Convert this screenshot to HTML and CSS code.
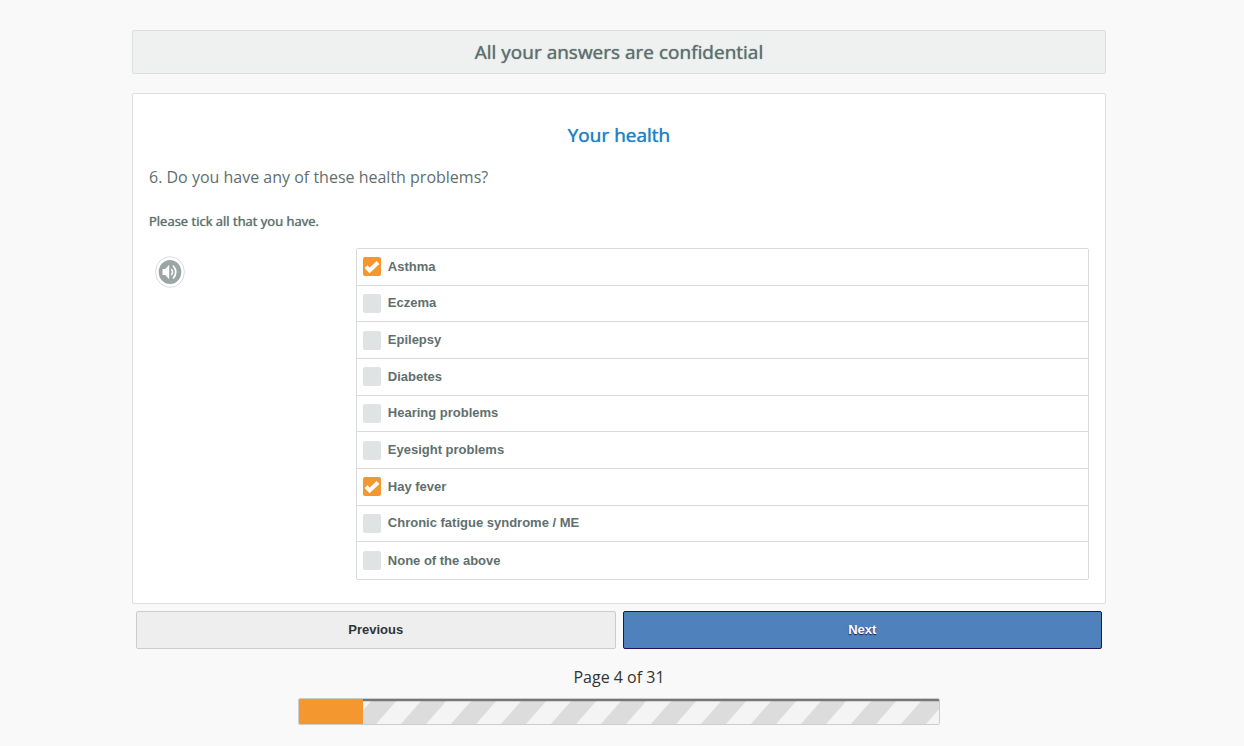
FILE: index.html
```html
<!DOCTYPE html>
<html lang="en">
<head>
<meta charset="utf-8">
<meta name="viewport" content="width=device-width, initial-scale=1">
<title>Your health</title>
<link rel="stylesheet" href="styles.css">
</head>
<body>
<form class="survey">
  <header class="banner">All your answers are confidential</header>
  <main class="panel">
    <h1 class="title">Your health</h1>
    <h2 class="question" id="question">6. Do you have any of these health problems?</h2>
    <p class="hint">Please tick all that you have.</p>
    <div class="answer">
      <button class="audio" type="button" aria-label="Listen to the question">
        <svg viewBox="0 0 30 32" width="30" height="32" aria-hidden="true">
          <ellipse cx="15" cy="16" rx="14.4" ry="15.4" fill="#fff" stroke="#d9dcdc"/>
          <ellipse cx="15" cy="16" rx="11.3" ry="12" fill="#9aa5a5"/>
          <path d="M7.500 13h2.800l3.900-4.200v14.400L10.300 19H7.500z" fill="#fff"/>
          <path d="M16.300 13q2.600 3 0 6" fill="none" stroke="#fff" stroke-width="1.500"/>
          <path d="M18 9.500q5.600 6.500 0 13" fill="none" stroke="#fff" stroke-width="1.700"/>
        </svg>
      </button>
      <div class="options" role="group" aria-labelledby="question">
        <label class="option"><input class="tick" type="checkbox" checked><span class="box"><svg viewBox="0 0 18 19" aria-hidden="true"><path d="M3 9.700l3.600 3.800L15 5.500" fill="none" stroke="#fff" stroke-width="4"/></svg></span>Asthma</label>
        <label class="option"><input class="tick" type="checkbox"><span class="box"></span>Eczema</label>
        <label class="option"><input class="tick" type="checkbox"><span class="box"></span>Epilepsy</label>
        <label class="option"><input class="tick" type="checkbox"><span class="box"></span>Diabetes</label>
        <label class="option"><input class="tick" type="checkbox"><span class="box"></span>Hearing problems</label>
        <label class="option"><input class="tick" type="checkbox"><span class="box"></span>Eyesight problems</label>
        <label class="option"><input class="tick" type="checkbox" checked><span class="box"><svg viewBox="0 0 18 19" aria-hidden="true"><path d="M3 9.700l3.600 3.800L15 5.500" fill="none" stroke="#fff" stroke-width="4"/></svg></span>Hay fever</label>
        <label class="option"><input class="tick" type="checkbox"><span class="box"></span>Chronic fatigue syndrome / ME</label>
        <label class="option"><input class="tick" type="checkbox"><span class="box"></span>None of the above</label>
      </div>
    </div>
  </main>
  <nav class="buttons">
    <button class="button" type="button">Previous</button>
    <button class="button button-next" type="submit">Next</button>
  </nav>
  <footer class="footer">
    <div class="page" id="page">Page 4 of 31</div>
    <div class="progress" role="progressbar" aria-labelledby="page" aria-valuenow="10">
      <div class="done" style="width: 10%"></div>
      <svg class="stripes" aria-hidden="true">
        <defs><pattern id="stripe" width="50" height="25" patternUnits="userSpaceOnUse">
          <rect width="50" height="25" fill="#f4f4f4"/>
          <path d="M10 0h25L13 25h-25zM60 0h25L63 25H38z" fill="#dcdcdc"/>
        </pattern></defs>
        <rect width="100%" height="100%" fill="url(#stripe)"/>
        <rect width="100%" height="2" fill="#777"/>
        <rect y="2" width="100%" height="1" fill="#777" opacity=".25"/>
      </svg>
    </div>
  </footer>
</form>
</body>
</html>
```
FILE: styles.css
```css
* { box-sizing: border-box; }

body {
  margin: 0;
  padding: 30px 22px 20px 16px;
  background: #f9f9f9;
  color: #5f6f6e;
  font-family: "Open Sans", sans-serif;
}

.survey {
  max-width: 974px;
  margin: 0 auto;
}

.banner {
  padding: 6px 16px;
  border: 1px solid #dcdfdf;
  border-radius: 2px;
  background: #eff1f1;
  font-size: 19px;
  line-height: 30px;
  text-align: center;
}

.banner, .title, .hint {
  font-weight: 400;
  text-shadow: 0 0 1px currentColor;
}

.panel {
  margin-top: 19px;
  padding: 26px 16px 23px;
  border: 1px solid #dcdfdf;
  border-radius: 2px;
  background: #fff;
}

.title {
  margin: 0;
  color: #2380c8;
  font-size: 19px;
  line-height: 30px;
  text-align: center;
}

.question {
  margin: 14px 0 0;
  font-size: 16px;
  font-weight: 400;
  line-height: 26px;
}

.hint {
  margin: 21px 0 0;
  font-size: 13px;
  line-height: 20px;
}

.answer {
  display: grid;
  grid-template-columns: 22% 1fr;
  margin-top: 17px;
}

.audio {
  justify-self: start;
  align-self: start;
  margin: 8px 0 0 6px;
  padding: 0;
  border: 0;
  background: none;
  line-height: 0;
}

.options {
  display: grid;
  grid-auto-rows: 1fr;
  min-height: 332px;
  border: 1px solid #d9dbdb;
  border-radius: 2px;
  font-family: "Liberation Sans", Arial, sans-serif;
  font-size: 13px;
  font-weight: 700;
  line-height: 14px;
}

.option {
  position: relative;
  display: flex;
  align-items: center;
  gap: 7px;
  padding: 0 6px;
}

.option:not(:last-child) { border-bottom: 1px solid #d9dbdb; }

.tick {
  position: absolute;
  width: 18px;
  height: 19px;
  margin: 0;
  opacity: 0;
}

.box {
  width: 18px;
  height: 19px;
  border-radius: 2px;
  background: #dfe3e3;
}

.box svg { display: block; width: 100%; height: 100%; }

.tick:checked + .box { background: #f5972f; }

.buttons {
  display: grid;
  grid-template-columns: 1fr 1fr;
  gap: 7px;
  margin-top: 7px;
  padding: 0 4px;
}

.button {
  padding: 10px;
  border: 1px solid #ccc;
  border-radius: 2px;
  background: #eee;
  color: #2f3639;
  font: 700 13px/16px "Liberation Sans", Arial, sans-serif;
}

.button-next {
  border-color: #24125f;
  background: #4f81bd;
  color: #fff;
  text-shadow: 0 1px 1px #24125f;
}

.footer {
  width: 66%;
  margin: 15px auto 0;
  color: #333;
  font-size: 16px;
  line-height: 26px;
  text-align: center;
}

.progress {
  display: flex;
  height: 27px;
  margin-top: 8px;
  overflow: hidden;
  border: 1px solid #ccc;
  border-radius: 2px;
}

.done { background: #f5972f; }
.stripes { flex: 1; height: 25px; }
```
